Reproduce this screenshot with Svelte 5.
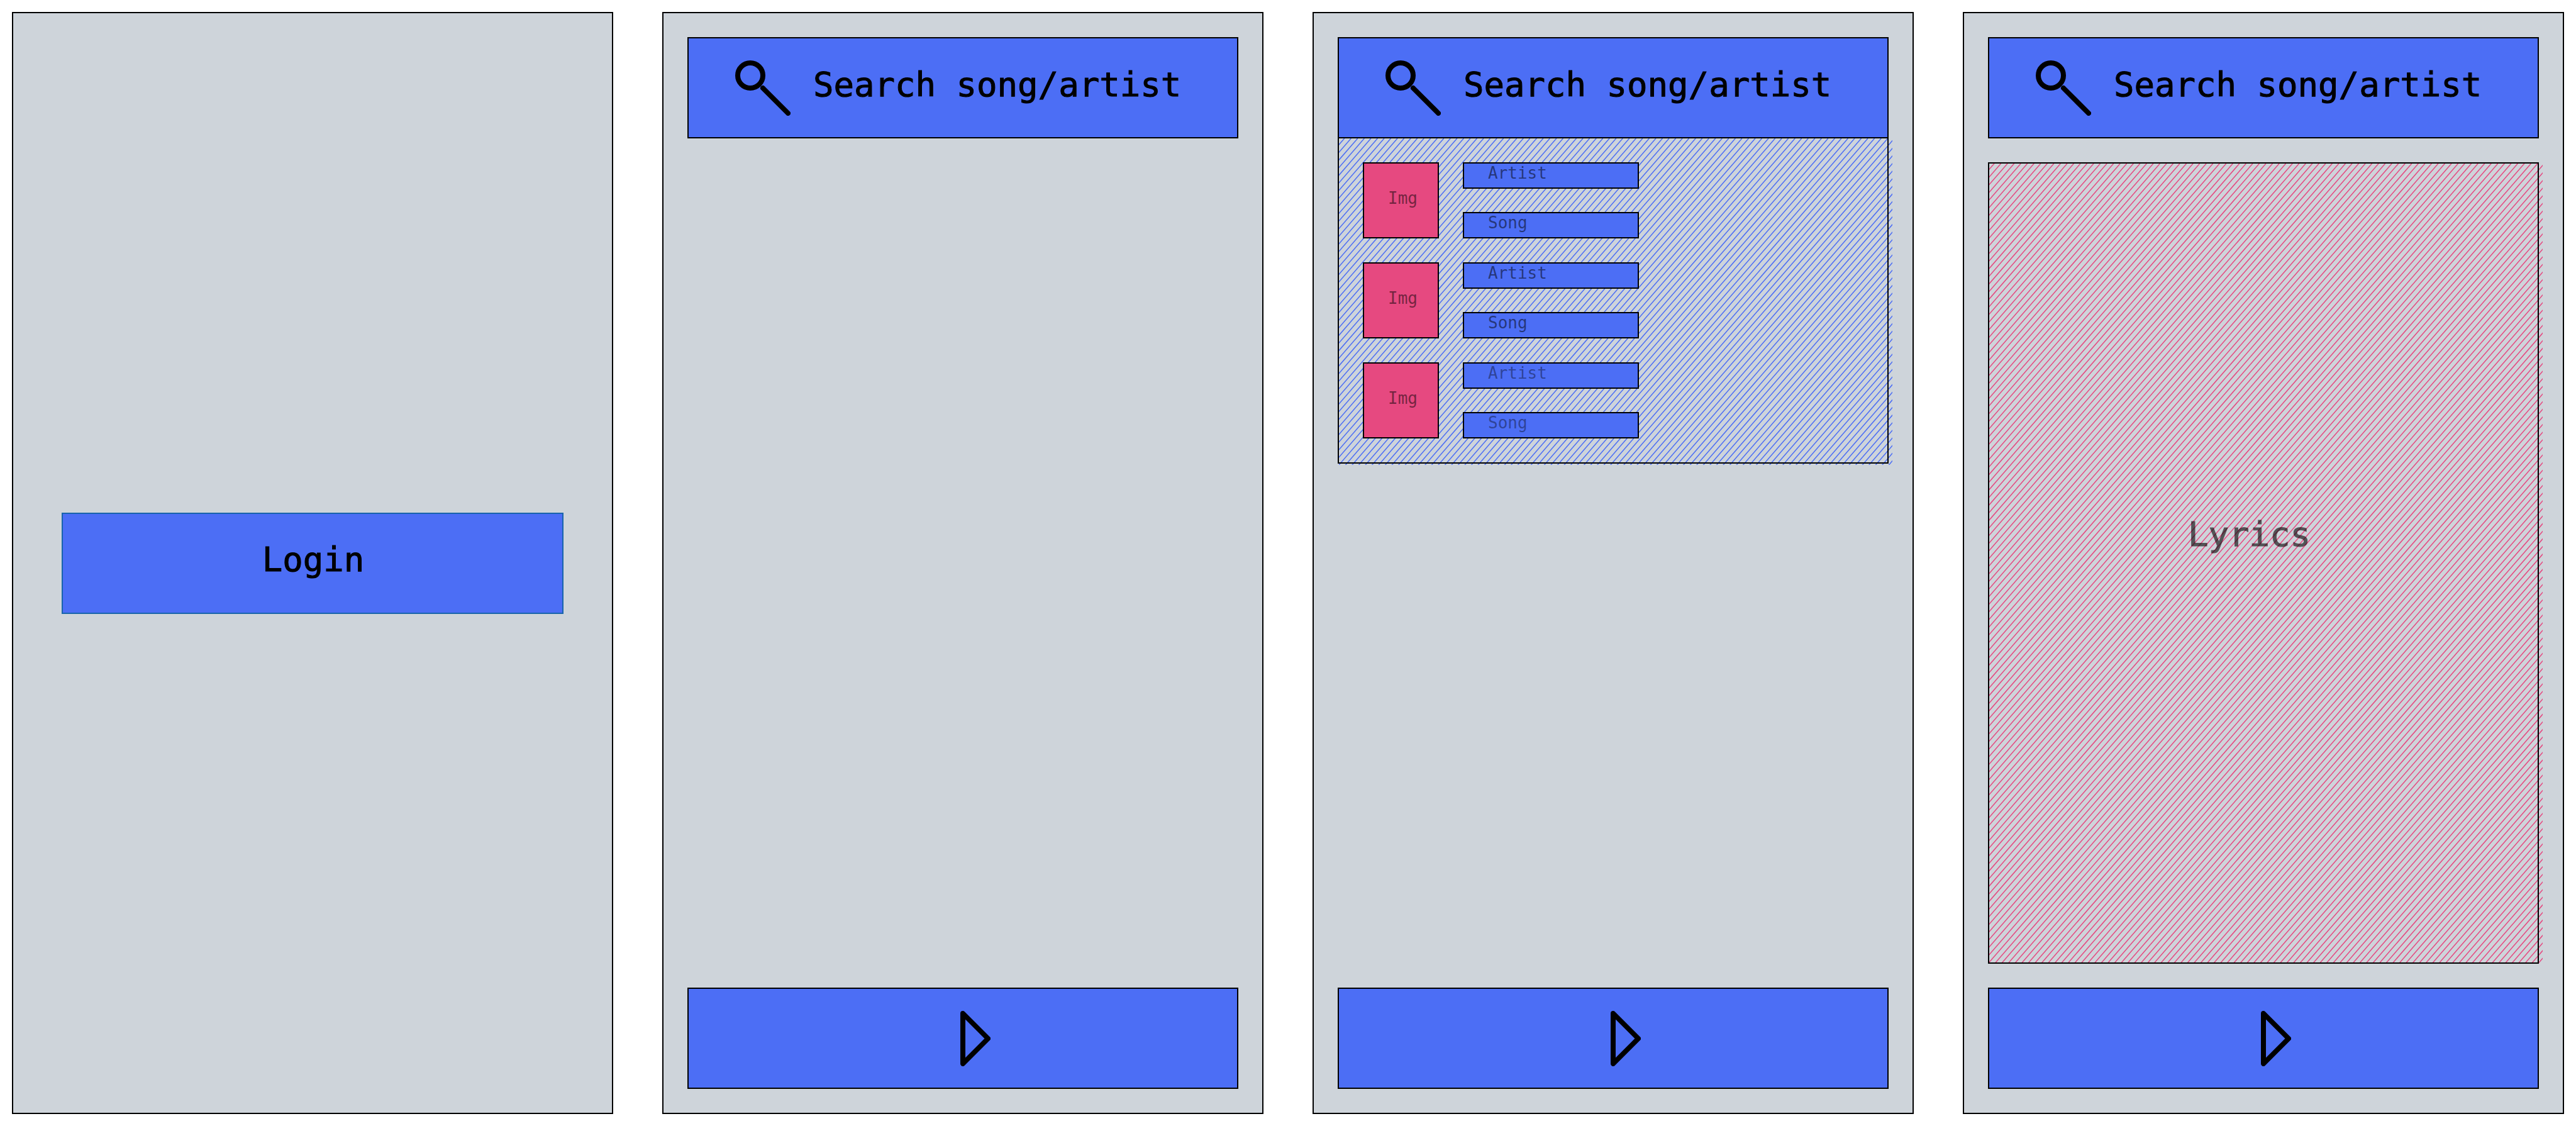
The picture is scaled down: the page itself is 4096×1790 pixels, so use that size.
<script>
  const results = [
    { id: 1, artist: 'Artist', song: 'Song', faded: false },
    { id: 2, artist: 'Artist', song: 'Song', faded: false },
    { id: 3, artist: 'Artist', song: 'Song', faded: true },
  ];

  // Parallel hatch strokes at 49 degrees, `step` apart along the horizontal.
  const step = 10.536;
  const run = 0.8693;

  function hatch(offset, height) {
    const last = Math.ceil((900 + height * run) / step);
    let d = '';
    for (let n = 0; n <= last; n += 1) {
      const x = offset + n * step;
      d += `M${x.toFixed(2)} 0L${(x - height * run).toFixed(2)} ${height}`;
    }
    return d;
  }

  const resultsHatch = hatch(8.7, 540);
  const lyricsHatch = hatch(8, 1300);
</script>

{#snippet searchBar(id)}
  <div class="bar search">
    <label for={id} aria-label="Search">
      <svg class="icon" viewBox="0 0 88 88" aria-hidden="true">
        <circle cx="24" cy="24" r="20" />
        <path d="M44 44L84 84" />
      </svg>
    </label>
    <input {id} type="text" placeholder="Search song/artist" />
  </div>
{/snippet}

{#snippet playBar()}
  <button class="bar play" type="button" aria-label="Play">
    <svg class="icon" viewBox="0 0 88 88" aria-hidden="true">
      <path d="M44 4L84 44L44 84Z" />
    </svg>
  </button>
{/snippet}

<main class="board">
  <section class="screen login-screen">
    <button class="bar login" type="button">Login</button>
  </section>

  <section class="screen">
    {@render searchBar('search-home')}
    <div class="spacer"></div>
    {@render playBar()}
  </section>

  <section class="screen">
    {@render searchBar('search-results')}
    <div class="panel results">
      <svg class="hatch blue" aria-hidden="true"><path d={resultsHatch} /></svg>
      <ul class="panel-body">
        {#each results as item (item.id)}
          <li>
            <div class="cover note">Img</div>
            <div class="fields" class:faded={item.faded}>
              <div class="field note">{item.artist}</div>
              <div class="field note">{item.song}</div>
            </div>
          </li>
        {/each}
      </ul>
    </div>
    <div class="spacer"></div>
    {@render playBar()}
  </section>

  <section class="screen">
    {@render searchBar('search-lyrics')}
    <div class="panel lyrics">
      <svg class="hatch pink" aria-hidden="true"><path d={lyricsHatch} /></svg>
      <div class="panel-body"><p>Lyrics</p></div>
    </div>
    {@render playBar()}
  </section>
</main>

<style>
  :global(body) {
    background: #fff;
  }

  .board,
  .board * {
    box-sizing: border-box;
  }

  .board {
    display: grid;
    grid-template-columns: repeat(4, minmax(0, 1fr));
    gap: 78px;
    min-height: 100vh;
    padding: 19px;
    color: #000;
    font-family: 'DejaVu Sans Mono', 'Liberation Mono', monospace;
    font-size: 54px;
    line-height: 64px;
  }

  .screen {
    display: flex;
    flex-direction: column;
    padding: 38px;
    border: 2px solid #000;
    background: #ced4da;
  }

  .login-screen {
    justify-content: center;
    padding: 38px 77px;
  }

  .spacer {
    flex: 1;
    min-height: 38px;
  }

  .bar {
    display: flex;
    align-items: center;
    flex: none;
    width: 100%;
    height: 161px;
    margin: 0;
    border: 2px solid #000;
    border-radius: 0;
    background: #4c6ef5;
    color: inherit;
    font: inherit;
  }

  .login {
    justify-content: center;
    padding: 0 0 10px 2px;
    border-color: #1864ab;
    -webkit-text-stroke: 1px #000;
  }

  .play {
    justify-content: center;
    padding: 0;
  }

  .search {
    gap: 36px;
    padding-left: 74px;
  }

  .search label {
    display: flex;
  }

  .search input {
    flex: 1;
    min-width: 0;
    height: 100%;
    padding: 0 0 10px;
    border: 0;
    outline: 0;
    background: none;
    color: inherit;
    font: inherit;
    -webkit-text-stroke: 1px #000;
  }

  .search input::placeholder {
    color: #000;
    opacity: 1;
  }

  .icon {
    display: block;
    width: 88px;
    height: 88px;
    fill: none;
    stroke: #000;
    stroke-width: 8;
    stroke-linecap: round;
    stroke-linejoin: round;
  }

  .panel {
    position: relative;
  }

  .hatch {
    position: absolute;
    top: 2px;
    left: 2px;
    width: calc(100% + 4px);
    height: calc(100% - 2px);
    fill: none;
    stroke-width: 1.5;
  }

  .blue {
    height: 100%;
    stroke: #4c6ef5;
  }

  .pink {
    stroke: #e64980;
  }

  .panel-body {
    position: relative;
    margin: 0;
    border: 2px solid #000;
  }

  .results {
    margin-top: -2px;
  }

  .results .panel-body {
    display: flex;
    flex-direction: column;
    gap: 38px;
    padding: 38px;
    list-style: none;
  }

  li {
    display: flex;
    gap: 38px;
  }

  .note {
    border: 2px solid #000;
    padding-left: 38px;
    color: rgba(0, 0, 0, 0.5);
    font-size: 26px;
    line-height: 30px;
  }

  .cover {
    width: 121px;
    height: 121px;
    padding-top: 40px;
    background: #e64980;
  }

  .fields {
    display: flex;
    flex-direction: column;
    justify-content: space-between;
    width: 280px;
  }

  .field {
    height: 42px;
    background: #4c6ef5;
  }

  .faded .note {
    color: rgba(0, 0, 0, 0.4);
  }

  .lyrics {
    display: flex;
    flex: 1;
    margin: 38px 0;
  }

  .lyrics .panel-body {
    flex: 1;
    padding: 558px 38px 38px 316px;
  }

  p {
    margin: 0;
    color: #000;
    opacity: 0.6;
    -webkit-text-stroke: 1px #000;
  }
</style>
